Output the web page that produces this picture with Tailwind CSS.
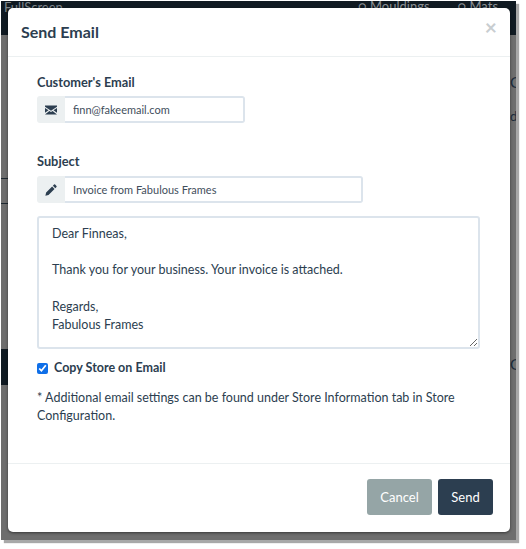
<!DOCTYPE html>
<html lang="en">
<head>
  <meta charset="UTF-8" />
  <title>Send Email</title>
  <script src="https://cdn.jsdelivr.net/npm/@tailwindcss/browser@4"></script>
</head>
<body class="bg-white font-['Lato',sans-serif] text-[#2c3e50]">
  <div class="relative w-[526px] h-[549px] overflow-hidden bg-white">
    <!-- page behind the modal -->
    <div class="absolute left-[1px] top-[1px] w-[515px] h-[539px] bg-[#6e6e6e] shadow-[3px_3px_1px_#a8a8a8] overflow-hidden">
      <div class="h-[34px] bg-[#101a22] text-[#7f868c] text-[13px] pl-[3px] leading-[13px]">FullScreen</div>
      <div class="absolute top-[-4px] left-[357px] flex gap-[28px] text-[#8c9196] text-[13px]">
        <span>○ Mouldings</span>
        <span>○ Mats</span>
      </div>
      <div class="absolute left-0 top-[348px] w-[8px] h-[36px] bg-[#101a22]"></div>
      <div class="absolute left-0 top-[177px] w-[8px] h-px bg-[#1c2730]"></div>
      <div class="absolute left-0 top-[202px] w-[8px] h-px bg-[#1c2730]"></div>
      <div class="absolute left-[509px] top-[74px] text-[15px] leading-none text-[#1c2c3c]">C</div>
      <div class="absolute left-[509px] top-[109px] text-[13px] leading-none text-[#1c2c3c]">d</div>
      <div class="absolute left-[509px] top-[356px] text-[15px] leading-none text-[#1c2c3c]">G</div>
    </div>

    <!-- modal -->
    <div class="absolute left-[8px] top-[8px] w-[502px] h-[524px] bg-white rounded-[5px] shadow-[0_1px_3px_rgba(0,0,0,0.5)] flex flex-col">
      <div class="h-[49px] border-b border-[#ecf0f1] flex items-start justify-between px-[13px] shrink-0">
        <h4 class="text-[16px] font-bold leading-[47px]">Send Email</h4>
        <span class="text-[#c8cdd0] text-[21px] leading-none mt-[8px] font-bold">×</span>
      </div>

      <div class="flex-1 pl-[29px] pr-[30px] pt-[17px]">
        <label class="block text-[12.8px] font-bold leading-[16px] mb-[6px]">Customer's Email</label>
        <div class="flex w-[208px] h-[27px]">
          <span class="w-[28px] bg-[#ecf0f1] rounded-l-[3px] flex items-center justify-center">
            <svg class="w-[12px] h-[12px]" viewBox="0 0 16 16" fill="#2c3e50"><path d="M0 2h16v1.6L8 9 0 3.6V2z"/><path d="M0 5.2v6.6l4.7-3.4L0 5.2zM5.8 9.2 0 14h16l-5.8-4.8L8 10.7 5.8 9.2zM11.3 8.4l4.7 3.4V5.2l-4.7 3.2z"/></svg>
          </span>
          <input value="finn@fakeemail.com" class="flex-1 min-w-0 border-2 border-l-0 border-[#dce4ec] rounded-r-[3px] px-[8px] pt-[1px] text-[11px] text-[#3f4e5c] outline-none" />
        </div>

        <label class="block text-[12.8px] font-bold leading-[16px] mt-[30px] mb-[7px]">Subject</label>
        <div class="flex w-[326px] h-[27px]">
          <span class="w-[28px] bg-[#ecf0f1] rounded-l-[3px] flex items-center justify-center">
            <svg class="w-[12px] h-[12px]" viewBox="0 0 16 16" fill="#2c3e50"><path d="M12.1.7a1 1 0 0 1 1.4 0l1.8 1.8a1 1 0 0 1 0 1.4l-1.6 1.6-3.2-3.2L12.1.7zM9.5 3.3l3.2 3.2-8 8-4.2 1 1-4.2 8-8z"/></svg>
          </span>
          <input value="Invoice from Fabulous Frames" class="flex-1 min-w-0 border-2 border-l-0 border-[#dce4ec] rounded-r-[3px] px-[8px] pt-[1px] text-[11px] text-[#3f4e5c] outline-none" />
        </div>

        <textarea class="block w-[443px] h-[133px] mt-[13px] border-2 border-[#dce4ec] rounded-[3px] pl-[13px] pr-[12px] py-[7px] text-[12.5px] leading-[18.2px] text-[#2c3e50] outline-none">Dear Finneas,

Thank you for your business. Your invoice is attached.

Regards,
Fabulous Frames</textarea>

        <label class="flex items-center gap-[6px] mt-[10px] text-[12.5px] font-bold leading-[18px]">
          <input type="checkbox" checked class="w-[11px] h-[11px] accent-[#0f6fe8] m-0" />
          Copy Store on Email
        </label>

        <p class="mt-[12px] text-[12.5px] leading-[18px] w-[443px]">* Additional email settings can be found under Store Information tab in Store Configuration.</p>
      </div>

      <div class="h-[69px] border-t border-[#ecf0f1] flex justify-end items-start gap-[6px] pt-[15px] pr-[17px] shrink-0">
        <button class="w-[65px] h-[36px] rounded-[3px] bg-[#95a5a6] text-white text-[13px] pt-[1px]">Cancel</button>
        <button class="w-[55px] h-[36px] rounded-[3px] bg-[#2c3e50] text-white text-[13px] pt-[1px]">Send</button>
      </div>
    </div>
  </div>
</body>
</html>
